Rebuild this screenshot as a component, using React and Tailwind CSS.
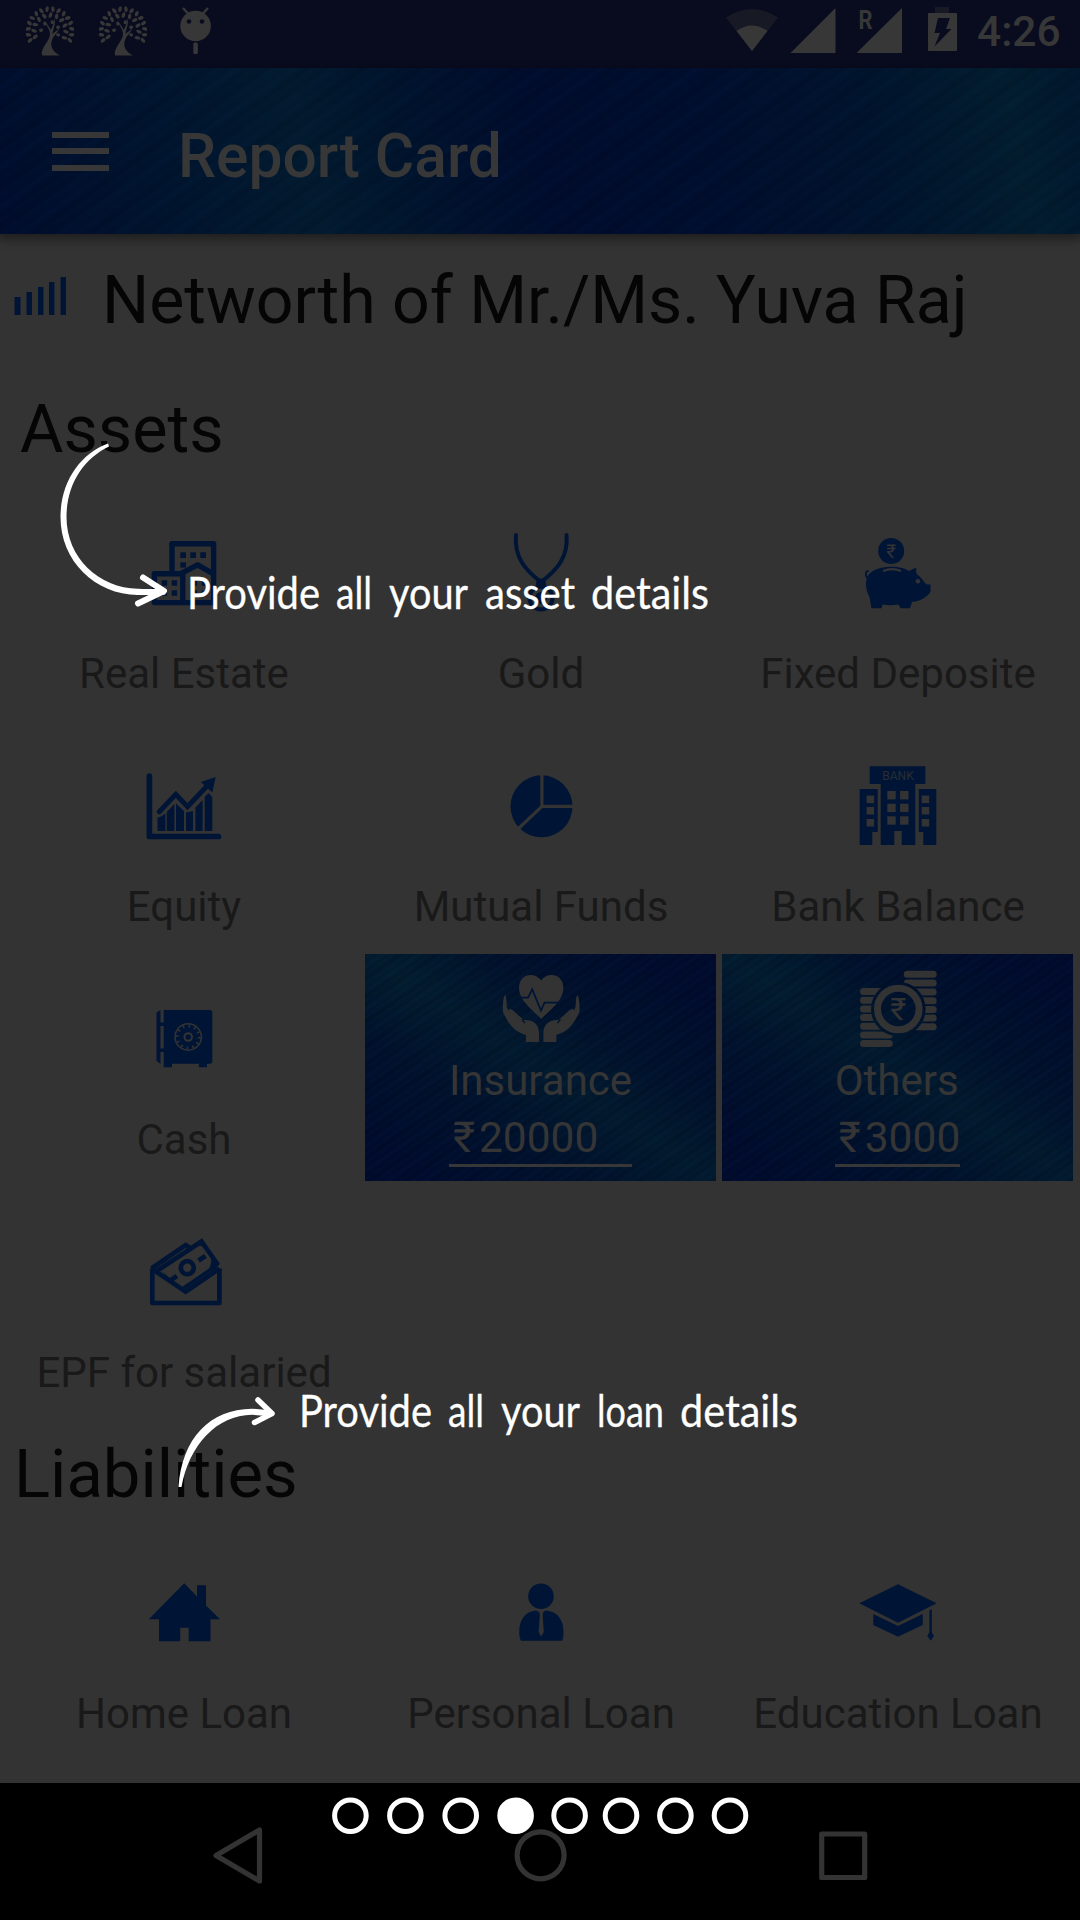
import React from "react";

const BG = "#333333";
const BLUE = "#001535";

function Icon({ children, className = "" }) {
  return (
    <svg viewBox="0 0 81 80" className={"block h-[80px] w-[81px] shrink-0 " + className} fill={BLUE}>
      {children}
    </svg>
  );
}

function Squares({ xs, ys, w, h, fill }) {
  return xs.flatMap((x) => ys.map((y) => <rect key={x + "-" + y} x={x} y={y} width={w} height={h} fill={fill} />));
}

function RealEstateIcon() {
  return (
    <Icon>
      <g fill="none" stroke={BLUE} strokeWidth="5.4" strokeLinejoin="round">
        <path d="M29 41V11.7h41.6v58.9H11.4V41.7h26.3L54.7 32.8l16 9.3" />
        <path d="M39.8 42v28" />
      </g>
      <Squares xs={[37.3, 47.3, 57.3]} ys={[20.3]} w={5.7} h={5.7} />
      <Squares xs={[37.3]} ys={[30.3]} w={5.7} h={5.3} />
      <Squares xs={[18.7, 28.7, 48.7, 58.7]} ys={[48.3, 58.3]} w={5.4} h={5.4} />
    </Icon>
  );
}

function GoldIcon() {
  return (
    <Icon>
      <g fill="none" stroke={BLUE} strokeWidth="4" strokeLinecap="round">
        <path d="M16 3C14 25 25 38 41 50C57 38 68.500 25 66.500 3" />
        <circle cx="41" cy="66" r="11.500" />
      </g>
      <circle cx="41" cy="51.500" r="5" />
      <circle cx="41" cy="66" r="6" />
    </Icon>
  );
}

function PiggyIcon() {
  return (
    <Icon>
      <circle cx="34.2" cy="19" r="13" />
      <text x="34.200" y="25.800" fontSize="19" textAnchor="middle" fill={BG} className="font-[Roboto,sans-serif]">₹</text>
      <path d="M14.500 76.300L12.500 65C8.500 58 8 50 10.500 44C14.500 37 27 34.700 34 34.700C43 34.700 48 36.500 52 39C54 38 56 36.500 59.500 36C58.500 40 59.500 42 62 44C66 47 67 51 70 52.500H73.500V60C70 65 64 69 55 70L53 76.300H43.500L41.500 72.500C36 73.500 31 73.500 25.500 72.500L24.600 76.300Z" />
      <path d="M11.500 46C8 45 8 39 11.500 39" fill="none" stroke={BLUE} strokeWidth="1.800" />
      <path d="M26 39C32 36.500 38 36.500 44 39" fill="none" stroke={BG} strokeWidth="2" />
      <circle cx="60.900" cy="49.300" r="2.200" fill={BG} />
    </Icon>
  );
}

function EquityIcon() {
  return (
    <Icon>
      <path d="M6.400 11V71.500H75.500" fill="none" stroke={BLUE} strokeWidth="5.700" strokeLinecap="round" strokeLinejoin="round" />
      <path d="M16.200 46.700L32.800 29.300L44.500 41.700L65 20" fill="none" stroke={BLUE} strokeWidth="5" strokeLinecap="round" />
      <path d="M72.700 12L57.900 17L69.300 27.500Z" />
      <path d="M14.500 66V52.500L17 52L22.400 48.500V66ZM23.800 66V47L31.400 39V66ZM33 66V38.500L41 46V66ZM43 66V47.500L50 46V66ZM52.400 66V42.500L59.600 35V66ZM61.700 66V32L65.500 28L69.300 32V66Z" />
    </Icon>
  );
}

function PieIcon() {
  return (
    <Icon>
      <circle cx="41.500" cy="41.300" r="31" />
      <path d="M41.900 9V41.300H74M41.900 41.300L18 64" fill="none" stroke={BG} strokeWidth="3.200" />
    </Icon>
  );
}

function BankIcon() {
  return (
    <Icon>
      <path d="M12.700 1.300H68.300V19H58.300V80H44.700V66H37.300V80H23.700V19H12.700Z" />
      <path d="M2.700 24H20.700V67H15.300V80H2.700ZM61.700 24H79.300V80H66.300V67H61.700Z" />
      <Squares xs={[30.3, 43.1]} ys={[26, 38.7, 51.3]} w={8.4} h={8.4} fill={BG} />
      <Squares xs={[9.6, 64.7]} ys={[30.6, 42, 54]} w={7.5} h={7.5} fill={BG} />
      <text x="41" y="14.800" fontSize="12" textAnchor="middle" fill="#2a2d33" className="font-[Roboto,sans-serif]">BANK</text>
    </Icon>
  );
}

function SafeIcon() {
  return (
    <Icon>
      <path d="M20.700 12H66.800Q69.300 12 69.300 14.500V63Q69.300 65.700 66.800 65.700H64V69.300H55.900V65.700H29V69.300H20.700Z" />
      <path d="M17.500 12V65.700L13.500 63V14.500ZM17 24.500H22V28H17ZM17 50.500H22V54H17Z" />
      <g fill="none" stroke={BG}>
        <circle cx="45.200" cy="39" r="13.200" strokeWidth="1.500" />
        <circle cx="45.200" cy="39" r="11" strokeWidth="3" strokeDasharray="1.500 4.260" />
        <circle cx="45.200" cy="39" r="3.800" strokeWidth="2" />
      </g>
    </Icon>
  );
}

function EnvelopeIcon() {
  return (
    <Icon>
      <g fill="none" stroke={BLUE} strokeWidth="4.700">
        <path d="M9.300 37.500V72H76.400V37.500" strokeLinejoin="round" />
        <path d="M8.500 37.500L42.700 60.700L76.500 37.500" />
        <path d="M8.500 37.500L42.700 14L47 17" />
        <path d="M14.500 39.500L58.500 10.500L74 32.500L70 37" />
        <path d="M13 36L46 13.500" strokeWidth="1.500" />
        <path d="M40 57.500L72 35.500" strokeWidth="3.500" />
        <circle cx="44.300" cy="36.700" r="6.500" />
        <path d="M55.500 29.500L62.500 25M27 49.500L34 45" />
      </g>
      <path d="M58.700 8L50 16C54 13.500 60 14 63.500 19ZM75.500 31L66 38C68 33 69 30 67.500 26ZM18 39L28 50L33 53Z" />
    </Icon>
  );
}

function HouseIcon() {
  return (
    <Icon>
      <path d="M41.200 11.300L54 24.500V13.300H63V33.500L77 47.300H67.500V69.300H45.700V55.700H37.200V69.300H16V47.300H5.800Z" />
    </Icon>
  );
}

function PersonIcon() {
  return (
    <Icon>
      <circle cx="41" cy="24.200" r="12.800" />
      <path d="M36 38.500L41 41L46 38.500C58 39.500 63.500 48 63.500 60Q63.500 66 62 68.700H21Q19.200 66 19.200 60C19.200 48 25 39.500 36 38.500Z" />
      <path d="M39 39.500H43.500L42.600 43L43.800 60L41.200 64.500L38.600 60L39.900 43Z" fill={BG} />
    </Icon>
  );
}

function CapIcon() {
  return (
    <Icon>
      <path d="M41 12.300L79.700 31.300L41 50.700L2.300 31.300ZM16.300 42L41 53.900L65.700 42V53L41 64.700L16.300 53ZM72.400 38.500L74.800 37V60L77 64L73.800 68.700L70.300 64L72.400 60Z" />
    </Icon>
  );
}

function Hand() {
  return (
    <>
      <path d="M5 26C7 28 6.500 36 7 39L23 51C34 50 39 56 39 64V73H26V66C14 62 9 56 3 43C2.500 37 3 29 5 26Z" />
      <path d="M8 41C10 36 15 42 25 54" fill="#333333" stroke="#00142f" strokeWidth="1.300" />
      <path d="M11 40C16 44 19 47 23 50L18 52Z" />
    </>
  );
}

function InsuranceIcon() {
  return (
    <Icon>
      <g fill={BG}>
        <path d="M41.200 50C34 42 19 32 19 19C19 5 34 2 41.200 11.500C48 2 63.400 5 63.400 19C63.400 32 49 42 41.200 50Z" />
        <Hand />
        <g transform="translate(82.400 0) scale(-1 1)"><Hand /></g>
      </g>
      <path d="M21 28.700H28L32.200 20.500L41 41.500L44.500 33.700H60" fill="none" stroke="#001433" strokeWidth="1.800" />
    </Icon>
  );
}

function CoinsIcon() {
  const right = [1.7, 10.6, 19.5, 28.3, 37, 45.6, 54.2];
  const left = [19, 27.7, 36.4, 45, 53.7, 62.4, 71];
  return (
    <Icon>
      <defs>
        <mask id="coin-gap">
          <rect width="81" height="80" fill="white" />
          <circle cx="41.300" cy="40" r="27.300" fill="black" />
        </mask>
      </defs>
      <g fill={BG} mask="url(#coin-gap)">
        {right.map((y) => <rect key={y} x="46.700" y={y} width="33" height="7" rx="3.500" />)}
        {left.map((y) => <rect key={y} x="3" y={y} width="32.800" height="7" rx="3.500" />)}
      </g>
      <circle cx="41.300" cy="40" r="20.800" fill="none" stroke={BG} strokeWidth="7" />
      <text x="41.300" y="51" fontSize="31" textAnchor="middle" fill={BG} className="font-[Roboto,sans-serif]">₹</text>
    </Icon>
  );
}

function Cell({ icon, label }) {
  return (
    <div className="flex h-[227px] w-[351px] flex-col items-center pt-[44px]">
      {icon}
      <div className="mt-[36.500px] ml-px text-[42px] leading-[49px] whitespace-nowrap text-[#191919]">{label}</div>
    </div>
  );
}

function Tile({ icon, label, amount }) {
  return (
    <div className="flex h-[227px] w-[351px] flex-col items-center bg-[repeating-linear-gradient(145deg,rgba(0,0,0,0.09)_0px,rgba(20,60,80,0.06)_3px,rgba(0,0,0,0)_5px,rgba(0,0,0,0.09)_7px),repeating-linear-gradient(147deg,rgba(0,0,0,0.1)_0px,rgba(10,40,60,0.05)_11px,rgba(0,0,0,0.1)_19px),radial-gradient(ellipse_90px_60px_at_12%_10%,#02243355,transparent),linear-gradient(to_top_right,#000b30_10%,#00122f_32%,#021b31_50%,#00122f_66%,#000b30_88%)] pt-[15px] text-[#353535]">
      {icon}
      <div className="flex flex-col pt-[7px]">
        <div className="text-[42px] leading-[49px]">{label}</div>
        <div className="mt-[8px] flex h-[54px] items-start border-b-[3px] border-[#373737] pl-[4px] text-[42.500px] leading-[49px]">
          <span className="mr-[3px] inline-block w-[23px]">₹</span>
          <span>{amount}</span>
        </div>
      </div>
    </div>
  );
}

function Tree() {
  const leaves = [];
  [[9, 5, 0.6], [16, 11, 0.15], [22, 16, 0]].forEach(([r, n, off], ring) => {
    for (let i = 0; i < n; i++) {
      const a = -Math.PI * 1.14 + ((i + off) / (n - 1 + off)) * Math.PI * 1.28;
      leaves.push({ x: 24 + Math.cos(a) * r, y: 27 + Math.sin(a) * r, a: (a * 180) / Math.PI + (i % 2 ? 20 : -15), l: ring ? 2.9 : 2 });
    }
  });
  return (
    <svg viewBox="0 0 48 52" className="h-[52px] w-[48px]" fill="#373737">
      {leaves.map((f, i) => (
        <ellipse key={i} cx={f.x} cy={f.y} rx={f.l} ry="1.700" transform={`rotate(${f.a} ${f.x} ${f.y})`} />
      ))}
      <path d="M16 51.500C14 44 24 37 24 30C24 25 20 22 19 17C22 22 24 23 24.500 26C27 22 28 19 28.500 14C30 20 27 25 26.500 30C28 28 31 27 33 24C32 29 28 31 26.500 35C23 42 27 48 34 51.500Z" />
    </svg>
  );
}

function StatusBar() {
  return (
    <div className="flex h-[68px] items-start bg-[#090c1f]">
      <div className="ml-[26px] flex pt-[4px]">
        <Tree />
        <div className="ml-[25px]"><Tree /></div>
      </div>
      <svg viewBox="0 0 34 50" className="mt-[6px] ml-[32px] h-[50px] w-[34px]" fill="#373737">
        <circle cx="16.600" cy="20" r="15.300" />
        <path d="M4 2L9 7.500M29 2L24 7.500" stroke="#373737" strokeWidth="2.600" />
        <circle cx="10" cy="15.500" r="2.300" fill="#090c1f" />
        <circle cx="23" cy="15.500" r="2.300" fill="#090c1f" />
        <rect x="14.300" y="36.500" width="4.600" height="11.500" rx="1.500" />
      </svg>
      <svg viewBox="725 0 240 60" className="ml-[512px] h-[60px] w-[240px]" fill="#373737">
        <path d="M752 51L726 17.500Q752 0.500 778 17.500Z" fill="#171a25" />
        <path d="M752 51L736.500 31Q752 20 767.500 31Z" />
        <path d="M790.500 53L835.500 8V53ZM856.500 53L902 8V53Z" />
        <text x="858.500" y="29.300" fontSize="26" fontWeight="700" textLength="14" lengthAdjust="spacingAndGlyphs" className="font-[Roboto,sans-serif]">R</text>
        <rect x="935" y="7" width="14" height="6" fill="#171a25" />
        <rect x="928" y="13" width="29" height="38" rx="1" />
        <path d="M938 18H950L946 29H951.500L934.500 46.500L940 33H934.500Z" fill="#090c1f" />
      </svg>
      <div className="ml-[12px] pt-[7px] text-[42.5px] leading-[50px] font-medium text-[#373737]">4:26</div>
    </div>
  );
}

function Toolbar() {
  return (
    <div className="flex h-[166px] items-center bg-[repeating-linear-gradient(145deg,rgba(0,0,0,0.07)_0px,rgba(20,60,80,0.04)_4px,rgba(0,0,0,0)_8px,rgba(0,0,0,0.07)_11px),repeating-linear-gradient(143deg,rgba(0,0,0,0.08)_0px,rgba(10,40,60,0.04)_19px,rgba(0,0,0,0.08)_31px),linear-gradient(78deg,#000c2f_0%,#001430_15%,#021b31_29%,#00142f_38%,#000c2f_50%,#000e30_66%,#00142f_80%,#021e31_93%,#001830_100%)] shadow-[0_4px_9px_2px_rgba(0,0,0,0.38)]">
      <div className="ml-[52px] flex w-[57px] flex-col gap-[10.500px]">
        <div className="h-[6px] bg-[#373737]" />
        <div className="h-[6px] bg-[#373737]" />
        <div className="h-[6px] bg-[#373737]" />
      </div>
      <div className="mt-[12px] ml-[69px] text-[60.5px] leading-[70px] font-medium text-[#373737]">Report Card</div>
    </div>
  );
}

function Hint({ words, className }) {
  return (
    <div className={"absolute h-[60px] font-[Lato,sans-serif] text-[44px] leading-[60px] text-white " + className}>
      <svg className="block h-[60px] w-[560px] overflow-visible" fill="white" stroke="white" strokeWidth="0.300" strokeLinejoin="round">
        {words.map(([w, x, len]) => (
          <text key={w} x={x} y="44" textLength={len} lengthAdjust="spacingAndGlyphs">{w}</text>
        ))}
      </svg>
    </div>
  );
}

function Coach() {
  return (
    <>
      <svg viewBox="0 0 130 180" className="absolute top-[435px] left-[50px] h-[180px] w-[130px]" fill="white">
        <path d="M58 8.500C30 19 10.500 47 10.500 82C10.500 126 45 159.500 88 160L93 160V154L88 153.800C49 153 16.500 123 16.500 82C16.500 50 33 24 59 11.500Z" />
        <path d="M88 157H113M93 142.500L114 156L88 168.500" fill="none" stroke="white" strokeWidth="6" strokeLinecap="round" strokeLinejoin="round" />
      </svg>
      <Hint className="top-[565px] left-[187px]" words={[["Provide", 0, 133], ["all", 149, 36], ["your", 202, 79], ["asset", 298, 90], ["details", 404, 118]]} />
      <svg viewBox="0 0 110 100" className="absolute top-[1390px] left-[172px] h-[100px] w-[110px]" fill="white">
        <path d="M6.500 97C10 48 38 19 80 18.700L95 20V26L80 24.800C45 25 17 55 9.500 97Z" />
        <path d="M86 10L100 23.500L82.500 32.500" fill="none" stroke="white" strokeWidth="5.500" strokeLinecap="round" strokeLinejoin="round" />
      </svg>
      <Hint className="top-[1383px] left-[299px]" words={[["Provide", 0, 133], ["all", 149, 36], ["your", 202, 79], ["loan", 298, 67], ["details", 381, 118]]} />
    </>
  );
}

function NavBar() {
  const dots = [350.4, 405.4, 460.7, 515.6, 569.6, 621, 675.4, 730];
  return (
    <div className="h-[137px] w-full bg-black">
      <svg viewBox="0 1783 1080 137" className="block h-[137px] w-[1080px]" fill="none">
        <g stroke="#333333" strokeWidth="5.200" strokeLinejoin="round">
          <path d="M216 1855.500L259.500 1830V1881Z" />
          <circle cx="540.600" cy="1855.300" r="23.500" />
          <rect x="821.700" y="1834" width="43" height="43.500" />
        </g>
        <g stroke="white" strokeWidth="5">
          {dots.map((x, i) => <circle key={x} cx={x} cy="1815.700" r="15.800" fill={i === 3 ? "white" : "none"} />)}
        </g>
      </svg>
    </div>
  );
}

export default function App() {
  return (
    <div className="relative flex h-[1920px] w-[1080px] flex-col overflow-hidden bg-[#333333] font-[Roboto,sans-serif]">
      <StatusBar />
      <Toolbar />
      <div className="flex h-[137px] items-start pt-[28px]">
        <svg viewBox="0 0 54 40" className="mt-[14px] ml-[14px] h-[40px] w-[54px]" fill={BLUE}>
          <path d="M.5 21H6.500V39H.5ZM12.500 16H18V39H12.500ZM24 11H29.400V39H24ZM35 6H40.400V39H35ZM46.600 1H52V39H46.600Z" />
        </svg>
        <h1 className="ml-[34px] text-[66.2px] leading-[78px] whitespace-nowrap text-[#050505]">Networth of Mr./Ms. Yuva Raj</h1>
      </div>
      <h2 className="-mt-px h-[118px] pt-[20px] pl-[20px] text-[66.6px] leading-[78px] text-[#050505]">Assets</h2>
      <div className="ml-[8px] grid grid-cols-[351px_351px_351px] gap-[6px]">
        <Cell icon={<RealEstateIcon />} label="Real Estate" />
        <Cell icon={<GoldIcon />} label="Gold" />
        <Cell icon={<PiggyIcon />} label="Fixed Deposite" />
        <Cell icon={<EquityIcon />} label="Equity" />
        <Cell icon={<PieIcon />} label="Mutual Funds" />
        <Cell icon={<BankIcon />} label="Bank Balance" />
        <Cell icon={<SafeIcon />} label="Cash" />
        <Tile icon={<InsuranceIcon />} label="Insurance" amount="20000" />
        <Tile icon={<CoinsIcon />} label="Others" amount="3000" />
        <Cell icon={<EnvelopeIcon />} label="EPF for salaried" />
      </div>
      <h2 className="h-[114px] pt-[21px] pl-[14px] text-[67px] leading-[78px] text-[#050505]">Liabilities</h2>
      <div className="ml-[8px] grid h-[255px] grid-cols-[351px_351px_351px] gap-[6px]">
        <Cell icon={<HouseIcon />} label="Home Loan" />
        <Cell icon={<PersonIcon />} label="Personal Loan" />
        <Cell icon={<CapIcon />} label="Education Loan" />
      </div>
      <NavBar />
      <Coach />
    </div>
  );
}
